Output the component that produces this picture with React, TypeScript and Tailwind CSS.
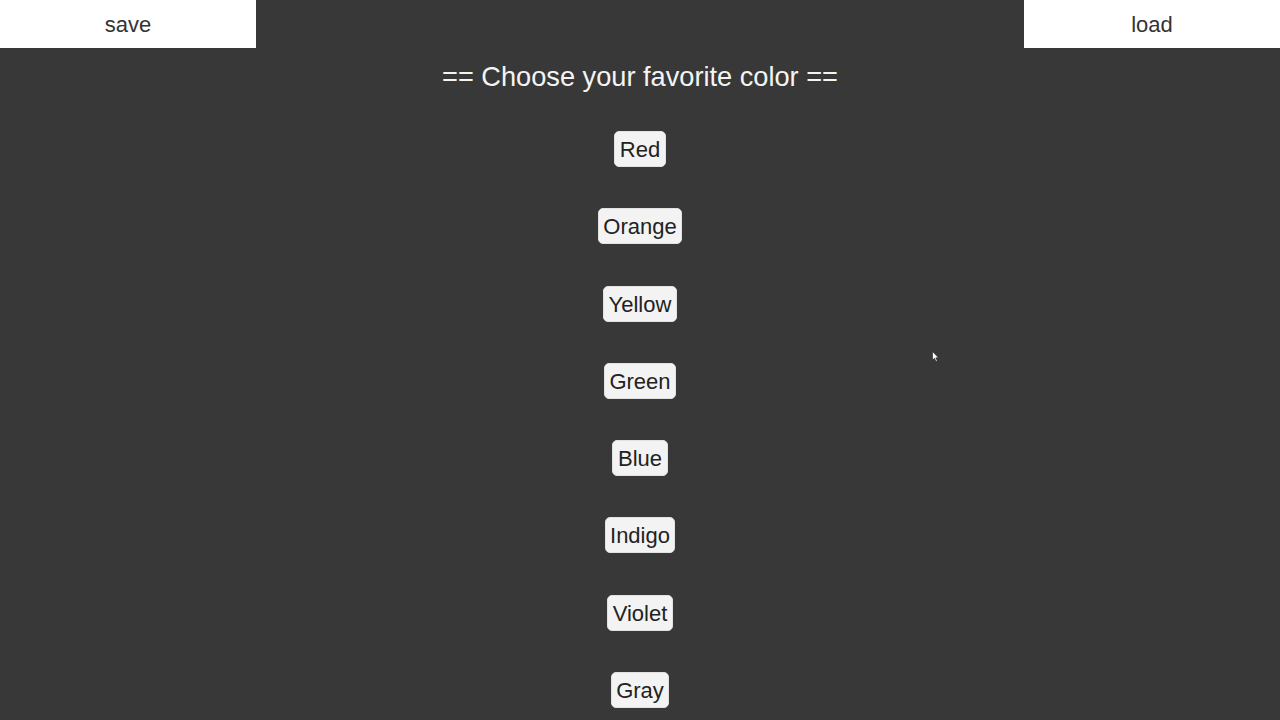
import React from 'react';

const COLORS = ['Red', 'Orange', 'Yellow', 'Green', 'Blue', 'Indigo', 'Violet', 'Gray'];

export default function App() {
  return (
    <div className="relative w-full h-[720px] overflow-hidden bg-[#383838] font-['Liberation_Sans',Arial,sans-serif]">
      {/* top bar */}
      <div className="flex justify-between h-12">
        <button className="w-64 h-12 bg-white text-[22px] text-[#333]">save</button>
        <button className="w-64 h-12 bg-white text-[22px] text-[#333]">load</button>
      </div>

      <h1 className="mt-[13px] text-center text-[27.2px] leading-8 text-[#f4f4f4]">
        == Choose your favorite color ==
      </h1>

      <div className="mt-[38px] flex flex-col items-center gap-[41.3px]">
        {COLORS.map((c) => (
          <button
            key={c}
            className="h-9 px-[4.5px] pt-[2px] rounded-[5px] bg-[#f3f3f3] border border-[#e2e2e2] text-[22px] leading-none text-[#222]"
          >
            {c}
          </button>
        ))}
      </div>

      {/* mouse pointer */}
      <svg className="absolute left-[932px] top-[351px]" width="8" height="12" viewBox="0 0 8 12">
        <path d="M0.5 0.5 L0.5 9 L2.5 7.2 L4 10.5 L5.3 9.9 L3.9 6.8 L6.5 6.8 Z" fill="#fff" stroke="#222" strokeWidth="0.6" />
      </svg>
    </div>
  );
}
